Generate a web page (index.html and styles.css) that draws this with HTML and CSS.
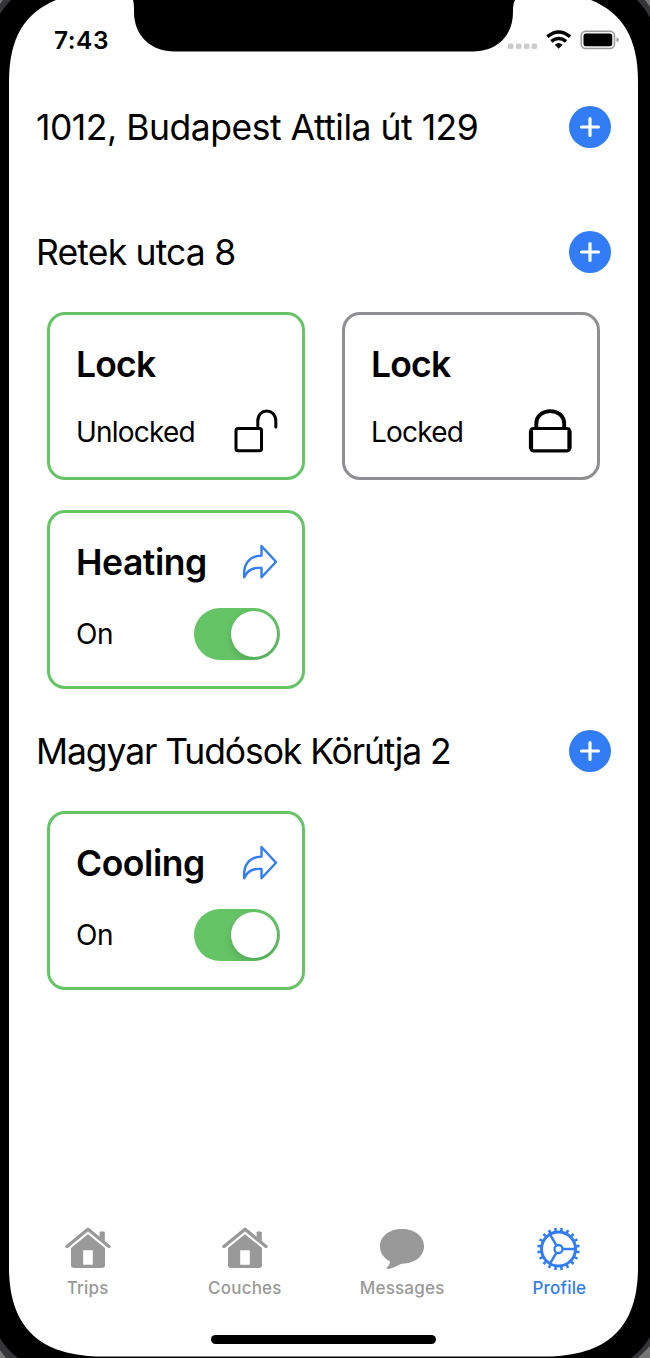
FILE: index.html
```html
<!DOCTYPE html>
<html lang="hu">
<head>
<meta charset="utf-8">
<title>Profile</title>
<link rel="stylesheet" href="styles.css">
</head>
<body>
<svg class="defs" width="0" height="0">
  <symbol id="plus" viewBox="0 0 42 42"><circle cx="21" cy="21" r="21" fill="#327df6"/><path d="M21 12.500v17M12.500 21h17" stroke="#fff" stroke-width="3.200" stroke-linecap="round"/></symbol>
  <symbol id="share" viewBox="0 0 36 36"><path d="M19.500 2L34 17.800 19.500 33.300V24C10.500 23 5 26.500 2.200 33.300 1 20 7.500 11.800 19.500 11.600z" fill="none" stroke="#327df6" stroke-width="2.400" stroke-linejoin="round"/></symbol>
  <symbol id="house" viewBox="0 0 46 42"><path d="M2 19.500L23 2.300 44 19.500" fill="none" stroke="#999" stroke-width="3.400" stroke-linecap="round" stroke-linejoin="round"/><path d="M34.600 10V5.500q0-1 1-1h3.200q1 0 1 1V15z" fill="#999"/><path fill-rule="evenodd" d="M23 7.200L40 21V38q0 3-3 3H9q-3 0-3-3V21zM18.200 23.200V37.700H27.800V23.200z" fill="#999"/></symbol>
</svg>
<div class="phone">
  <svg class="frame" width="650" height="1358" viewBox="0 0 650 1358">
    <rect width="650" height="1358" fill="#000"/>
    <path d="M0 0H11Q5 6 0 14zM637 0H650V18Q645 8 637 0zM0 1338Q7 1350 18 1358H0zM650 1337Q642 1350 631 1358H650z" fill="#353537"/>
    <path d="M0 0H3L0 4zM645 0H650V7zM0 1350L6 1358H0zM650 1346L638 1358H650z" fill="#777"/>
    <path d="M56 0C25 13 9 37 9 82V1267C9 1325 37 1356.500 103 1356.500H544C610 1356.500 638 1325 638 1267V82C638 37 622 13 591 0z" fill="#fff"/>
    <path d="M133 0C134 4 134 7 134 12C134 36 151 51.500 175 51.500H473C497 51.500 513 36 513 12C513 7 513 4 515 0z" fill="#000"/>
  </svg>
  <header class="status">
    <span class="time">7:43</span>
    <svg width="112" height="24" viewBox="507 28 112 24">
      <g fill="#ccc"><rect x="508" y="43.500" width="5.500" height="5.500" rx="1.500"/><rect x="516" y="43.500" width="5.500" height="5.500" rx="1.500"/><rect x="524" y="43.500" width="5.500" height="5.500" rx="1.500"/><rect x="531.500" y="43.500" width="5.500" height="5.500" rx="1.500"/></g>
      <g fill="none" stroke="#000" stroke-width="3.500"><path d="M547.300 36.700Q558.700 27.300 570.100 36.700"/><path d="M551.300 41.300Q558.700 35.600 566.100 41.300"/></g>
      <path d="M554.800 44.700Q558.700 41.500 562.600 44.700L558.700 48.700z"/>
      <rect x="581.200" y="31.200" width="33.300" height="17.300" rx="4.500" fill="#f4f4f4" stroke="#999" stroke-width="1.500"/>
      <rect x="583.500" y="33.500" width="28.700" height="12.700" rx="2.500"/>
      <path d="M616.500 37.300q2.300.5 2.300 2.500t-2.300 2.500z" fill="#999"/>
    </svg>
  </header>
  <main class="content">
    <section class="place empty">
      <div class="place-head"><h2 class="h-a">1012, Budapest Attila út 129</h2><svg class="add"><use href="#plus"/></svg></div>
    </section>
    <section class="place">
      <div class="place-head"><h2 class="h-b">Retek utca 8</h2><svg class="add"><use href="#plus"/></svg></div>
      <div class="cards">
        <article class="card lock on">
          <div class="row"><h3>Lock</h3></div>
          <div class="row"><span>Unlocked</span><svg class="lock-icon" viewBox="0 0 44 44" fill="none" stroke="#000" stroke-width="3" stroke-linecap="round"><rect x="3" y="19.500" width="25.500" height="22.300" rx="2"/><path d="M24.800 19V12C24.800 -1.300 42.800 -1.300 42.800 12V18"/></svg></div>
        </article>
        <article class="card lock">
          <div class="row"><h3>Lock</h3></div>
          <div class="row"><span>Locked</span><svg class="lock-icon" viewBox="0 0 44 44" fill="none" stroke="#000"><rect x="3" y="19.500" width="38.500" height="22.300" rx="2.500" stroke-width="3.200"/><path d="M3 21.500V39.800M41.500 21.500V39.800" stroke-width="4.200"/><path d="M8.300 19V15C8.300 -2.200 36.200 -2.200 36.200 15V19" stroke-width="3.900"/></svg></div>
        </article>
        <article class="card climate on">
          <div class="row"><h3>Heating</h3><svg class="share"><use href="#share"/></svg></div>
          <div class="row"><span>On</span><div class="toggle"><i></i></div></div>
        </article>
      </div>
    </section>
    <section class="place last">
      <div class="place-head"><h2 class="h-c">Magyar Tudósok Körútja 2</h2><svg class="add"><use href="#plus"/></svg></div>
      <div class="cards">
        <article class="card climate on">
          <div class="row"><h3>Cooling</h3><svg class="share"><use href="#share"/></svg></div>
          <div class="row"><span>On</span><div class="toggle"><i></i></div></div>
        </article>
      </div>
    </section>
  </main>
  <nav class="tabs">
    <div class="tab"><svg viewBox="0 0 46 42"><use href="#house"/></svg><span>Trips</span></div>
    <div class="tab"><svg viewBox="0 0 46 42"><use href="#house"/></svg><span>Couches</span></div>
    <div class="tab"><svg viewBox="0 0 46 42"><path d="M23 2C36 2 45 9.500 45 19.300S36 36.700 23 36.700C19 37.500 14 42 8.500 42Q6.800 42 8 40.300Q11.500 37 10.800 34.300C4.500 31 1 26 1 19.300C1 9.500 10 2 23 2z" fill="#999"/></svg><span>Messages</span></div>
    <div class="tab active"><svg viewBox="0 0 46 42" fill="none" stroke="#327df6"><circle cx="22.500" cy="22" r="17" stroke-width="3"/><circle cx="22.500" cy="22" r="19.500" stroke-width="3.600" pathLength="200" stroke-dasharray="4.200 5.800" stroke-dashoffset="7.100"/><circle cx="22.500" cy="22" r="4" stroke-width="2.300"/><path d="M27 22H39M20.300 18.200L14 7.300M20.300 25.800L14 36.700" stroke-width="2.500"/></svg><span>Profile</span></div>
  </nav>
  <div class="home-bar"></div>
</div>
</body>
</html>
```

FILE: styles.css
```css
* { box-sizing: border-box; }
body { margin: 0; background: #000; font-family: Inter, "Liberation Sans", sans-serif; color: #000; }
h2, h3 { margin: 0; white-space: nowrap; }
svg { display: block; flex: none; overflow: visible; }
.defs { position: absolute; }
.phone { position: relative; width: 650px; height: 1358px; display: flex; flex-direction: column; overflow: hidden; isolation: isolate; }
.frame { position: absolute; inset: 0; z-index: -1; }
.status { height: 52px; padding: 28px 31px 0 54px; display: flex; justify-content: space-between; }
.time { font-size: 24.5px; line-height: 24px; font-weight: 600; letter-spacing: 0.5px; }
.content { padding: 54px 39px 0 36px; flex: 1; }
.place.empty { margin-bottom: 83px; }
.place.last { margin-top: 41px; }
.place-head { height: 42px; display: flex; justify-content: space-between; align-items: center; }
.place-head h2 { font-size: 35.5px; font-weight: 400; line-height: 42px; padding-top: 2px; }
.h-a { letter-spacing: -0.48px; }
.h-b { letter-spacing: -0.83px; }
.h-c { letter-spacing: -1.1px; }
.add { width: 42px; height: 42px; }
.cards { margin: 39px 0 0 11px; display: grid; grid-template-columns: 258px 258px; column-gap: 37px; row-gap: 30px; }
.card { border: 3.5px solid #8e8e93; border-radius: 18px; padding: 26px 22px 0 26px; display: flex; flex-direction: column; }
.card.on { border-color: #65c466; }
.lock { height: 168px; }
.climate { height: 179px; }
.row { display: flex; align-items: center; justify-content: space-between; height: 44px; }
.row + .row { height: 52px; margin-top: 25px; }
.lock .row + .row { height: 44px; margin-top: 24px; }
.row h3 { font-size: 35.5px; line-height: 44px; font-weight: 600; letter-spacing: -0.8px; padding-top: 3px; }
.climate h3 { letter-spacing: -0.45px; }
.row span { font-size: 28px; line-height: 44px; letter-spacing: -0.3px; }
.lock .row span { letter-spacing: -0.8px; padding-top: 1px; }
.lock-icon { width: 44px; height: 44px; margin-right: 3px; }
.share { width: 36px; height: 36px; margin: 2px 2px 0 0; }
.toggle { width: 86px; height: 52px; border-radius: 26px; background: #65c466; padding: 3px; display: flex; justify-content: flex-end; overflow: hidden; }
.toggle i { width: 46px; height: 46px; border-radius: 50%; background: #fff; box-shadow: 0 4px 9px rgba(0,0,0,.15); }
.tabs { display: flex; margin: 0 12px 0 9px; height: 108px; }
.tab { flex: 1; display: flex; flex-direction: column; align-items: center; color: #999; }
.tab svg { width: 46px; height: 42px; }
.tab span { font-size: 17px; line-height: 20px; margin-top: 9px; font-weight: 450; letter-spacing: .2px; }
.tab.active { color: #327df6; }
.tab.active span { font-weight: 500; }
.home-bar { width: 225px; height: 9px; border-radius: 5px; background: #000; margin: 0 0 14px 211px; }
```
